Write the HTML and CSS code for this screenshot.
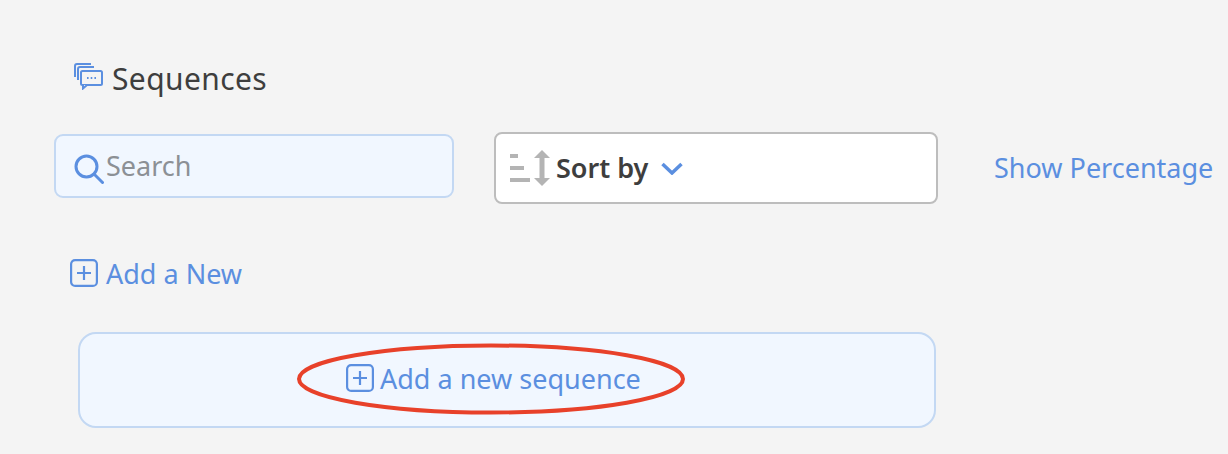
FILE: index.html
```html
<!DOCTYPE html>
<html lang="en">
<head>
<meta charset="utf-8">
<title>Sequences</title>
<link rel="stylesheet" href="styles.css">
</head>
<body>
<main class="page">
  <h1 class="title">
    <svg class="title-icon" viewBox="0 0 29 27" fill="none" stroke="#5b8fe0" stroke-width="2">
      <path d="M17 1H3a2 2 0 0 0-2 2v11"/>
      <path d="M20 4H6a2 2 0 0 0-2 2v11"/>
      <rect x="7" y="8" width="21" height="14" rx="1.5" fill="#f4f4f4"/>
      <path d="M9 22v3.5l4-3.500" fill="#f4f4f4"/>
      <path d="M13 15h1.600M16.700 15h1.600M20.400 15h1.600"/>
    </svg>
    <span>Sequences</span>
  </h1>
  <div class="toolbar">
    <label class="search">
      <svg class="search-icon" viewBox="0 0 30 30" fill="none" stroke="#5b8fe0" stroke-width="3" stroke-linecap="round">
        <circle cx="12.500" cy="12.500" r="10.500"/>
        <path d="M20.500 20.500l8 8"/>
      </svg>
      <span>Search</span>
    </label>
    <div class="sort">
      <svg class="sort-icon" viewBox="0 0 41 36" fill="#b4b4b4">
        <rect x="0" y="4" width="8" height="4"/>
        <rect x="0" y="16" width="14" height="4"/>
        <rect x="0" y="28" width="20" height="4"/>
        <path d="M32 0l8 8h-5.500v20H40l-8 8-8-8h5.500V8H24z"/>
      </svg>
      <span class="sort-label">Sort by</span>
      <svg class="chev" viewBox="0 0 22 13" fill="none" stroke="#5b8fe0" stroke-width="3.500">
        <path d="M1.500 2l9.500 9 9.500-9"/>
      </svg>
    </div>
    <a class="link percent">Show Percentage</a>
  </div>
  <a class="link add-row">
    <svg class="plus" viewBox="0 0 28 28" fill="none" stroke="#5b8fe0" stroke-width="2.200">
      <rect x="1.100" y="1.100" width="25.800" height="25.800" rx="4"/>
      <path d="M7 14h14M14 7v14"/>
    </svg>
    <span>Add a New</span>
  </a>
  <div class="card">
    <a class="link card-add">
      <svg class="plus" viewBox="0 0 28 28" fill="none" stroke="#5b8fe0" stroke-width="2.200">
        <rect x="1.100" y="1.100" width="25.800" height="25.800" rx="4"/>
        <path d="M7 14h14M14 7v14"/>
      </svg>
      <span>Add a new sequence</span>
    </a>
    <svg class="ring" viewBox="0 0 390 72" fill="none" stroke="#e8412a" stroke-width="4">
      <ellipse cx="195" cy="36" rx="192" ry="33.500"/>
    </svg>
  </div>
</main>
</body>
</html>
```
FILE: styles.css
```css
* { box-sizing: border-box; }
html, body { margin: 0; height: 100%; }
body {
  background: #f4f4f4;
  font-family: "Noto Sans", "Open Sans", sans-serif;
  color: #3e3e3e;
  overflow: hidden;
}
.page { padding: 61px 0 0 54px; }
.title {
  display: flex;
  align-items: center;
  gap: 9px;
  height: 34px;
  margin: 0 0 37px 20px;
  font-size: 30px;
  font-weight: 400;
  letter-spacing: 0.4px;
}
.title-icon { width: 29px; height: 27px; margin-top: -3px; }
.toolbar { display: flex; align-items: flex-start; }
.search {
  display: flex;
  align-items: center;
  gap: 2px;
  width: 400px;
  height: 64px;
  padding: 0 0 0 18px;
  margin: 2px 40px 0 0;
  background: #f1f7ff;
  border: 2px solid #c3d8f3;
  border-radius: 9px;
  font-size: 27px;
  color: #8c9095;
}
.search span { margin-top: -1px; }
.search-icon { width: 30px; height: 30px; margin-top: 6px; flex: none; }
.sort {
  display: flex;
  align-items: center;
  width: 444px;
  height: 72px;
  padding-left: 14px;
  margin-right: 56px;
  background: #fff;
  border: 2px solid #bdbdbd;
  border-radius: 8px;
}
.sort-icon { width: 41px; height: 36px; flex: none; }
.sort-label { margin-left: 5px; margin-top: -2px; font-size: 27px; font-weight: 600; }
.chev { width: 22px; height: 13px; margin-left: 13px; }
.link { color: #5b8fe0; font-size: 27px; }
.percent { display: block; margin-top: 17px; white-space: nowrap; }
.add-row {
  display: flex;
  align-items: center;
  gap: 8px;
  margin: 51px 0 0 16px;
  height: 36px;
}
.plus { width: 28px; height: 28px; flex: none; }
.card {
  position: relative;
  display: flex;
  align-items: center;
  width: 858px;
  height: 96px;
  margin: 41px 0 0 24px;
  padding: 0 0 4px 266px;
  background: #f1f7ff;
  border: 2px solid #c3d8f3;
  border-radius: 18px;
}
.card-add { display: flex; align-items: center; gap: 6px; white-space: nowrap; }
.ring {
  position: absolute;
  left: 216px;
  top: 9px;
  width: 390px;
  height: 72px;
}
```
